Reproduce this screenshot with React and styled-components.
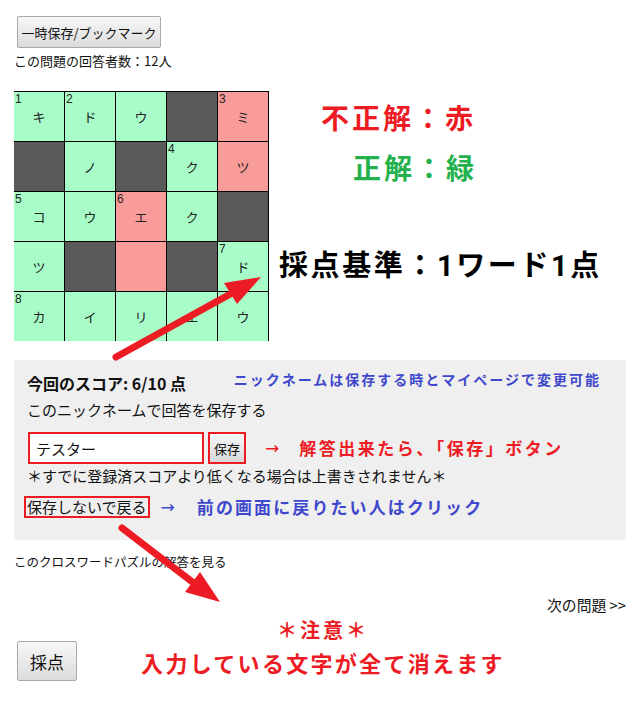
import React from "react";
import styled, { createGlobalStyle } from "styled-components";

const Global = createGlobalStyle`
  html, body { margin: 0; padding: 0; background: #fff; }
  body { font-family: "Noto Sans CJK JP", "Noto Sans", sans-serif; color: #111; }
  * { box-sizing: border-box; }
`;

const Page = styled.div`
  position: relative;
  width: 639px;
  height: 701px;
  padding: 16px 13px 0 14px;
  overflow: hidden;
`;

const GrayButton = styled.button`
  font-family: "Noto Sans CJK JP", sans-serif;
  font-size: ${(p) => p.$size || 14}px;
  color: #111;
  height: ${(p) => p.$h || 32}px;
  width: ${(p) => p.$w}px;
  margin-left: 3px;
  padding: 0;
  border: 1px solid #a9a9a9;
  border-radius: 2px;
  background: linear-gradient(#f7f7f7, #dcdcdc);
  display: flex;
  align-items: center;
  justify-content: center;
  line-height: 1;
  white-space: nowrap;
`;

const Count = styled.div`
  font-size: 13px;
  line-height: 18px;
  margin-top: 4px;
`;

const BoardRow = styled.div`
  display: flex;
  margin-top: 21px;
`;

const Board = styled.div`
  display: grid;
  grid-template-columns: repeat(5, 51px);
  grid-template-rows: repeat(5, 50px);
`;

const colors = { g: "#a7fcc7", r: "#f99c99", b: "#5a5a5a" };

const Cell = styled.div`
  position: relative;
  background: ${(p) => colors[p.$c]};
  border-top: 1px solid #000;
  border-right: 1px solid #000;
  display: flex;
  align-items: center;
  justify-content: center;
  font-size: 13px;
  color: #222;
`;

const Num = styled.span`
  position: absolute;
  left: 1px;
  top: 1px;
  font-family: "Liberation Sans", Arial, sans-serif;
  font-size: 12px;
  line-height: 12px;
  color: #222;
`;

const Legend = styled.div`
  display: flex;
  flex-direction: column;
  margin-left: 10px;
  padding-top: 11px;
`;

const LegendLine = styled.div`
  font-family: Roboto, "Noto Sans CJK JP", sans-serif;
  font-weight: 700;
  font-size: ${(p) => p.$size}px;
  line-height: ${(p) => p.$lh}px;
  letter-spacing: ${(p) => p.$ls}px;
  color: ${(p) => p.$color};
  padding-left: ${(p) => p.$pl}px;
  margin-top: ${(p) => p.$mt || 0}px;
  white-space: nowrap;
`;

const Panel = styled.div`
  margin-top: 19px;
  height: 180px;
  background: #efefef;
  border-radius: 3px;
  padding: 10px 25px 0 13px;
`;

const PanelHead = styled.div`
  display: flex;
  justify-content: space-between;
  align-items: flex-start;
`;

const Score = styled.div`
  font-size: 16px;
  font-weight: 700;
  line-height: 20px;
  padding-top: 3px;
`;

const Hint = styled.span`
  font-weight: 700;
  color: ${(p) => p.$color};
  font-size: ${(p) => p.$size}px;
  letter-spacing: ${(p) => p.$ls}px;
  line-height: ${(p) => p.$lh || 18}px;
  white-space: nowrap;
`;

const Arrow = styled.span`
  color: ${(p) => p.$color};
  font-size: 17px;
  line-height: 20px;
  margin-right: ${(p) => p.$gap}px;
  font-family: "DejaVu Sans", sans-serif;
`;

const PlainLine = styled.div`
  font-size: 15px;
  line-height: 20px;
  margin-top: ${(p) => p.$mt}px;
  white-space: nowrap;
`;

const InputRow = styled.div`
  display: flex;
  align-items: center;
  margin-top: 12px;
  height: 32px;
`;

const NameInput = styled.input`
  width: 176px;
  height: 32px;
  margin-left: 1px;
  border: 2px solid #ed1c24;
  background: #fff;
  padding: 0 6px;
  font-family: "Noto Sans CJK JP", sans-serif;
  font-size: 15px;
  color: #111;
  outline: none;
`;

const SaveButton = styled.button`
  width: 38px;
  height: 32px;
  margin-left: 4px;
  margin-right: 19px;
  padding: 0;
  border: 2px solid #ed1c24;
  background: linear-gradient(#f7f7f7, #d9d9d9);
  font-family: "Noto Sans CJK JP", sans-serif;
  font-size: 13px;
  color: #111;
`;

const BackRow = styled.div`
  display: flex;
  align-items: center;
  margin-top: 10px;
  margin-left: -3px;
`;

const BackBox = styled.span`
  border: 2px solid #ed1c24;
  height: 22px;
  padding: 0 1px;
  font-size: 15px;
  line-height: 18px;
  margin-right: 11px;
  white-space: nowrap;
`;

const SmallLink = styled.div`
  font-size: 12.5px;
  line-height: 16px;
  margin-top: 14px;
`;

const NextLink = styled.div`
  text-align: right;
  font-size: 14.8px;
  line-height: 18px;
  margin-top: 26px;
`;

const Bottom = styled.div`
  display: grid;
  margin-top: 3px;
  & > * { grid-area: 1 / 1; }
`;

const Notice = styled.div`
  justify-self: center;
  display: flex;
  flex-direction: column;
  align-items: center;
  gap: 5px;
  color: #ed1c24;
  font-weight: 700;
  margin-left: 6px;
`;

const NoticeLine = styled.div`
  font-size: ${(p) => p.$size}px;
  line-height: ${(p) => p.$lh}px;
  letter-spacing: ${(p) => p.$ls}px;
  white-space: nowrap;
`;

const ScoreButton = styled(GrayButton)`
  justify-self: start;
  align-self: start;
  margin-top: 24px;
`;

const Overlay = styled.svg`
  position: absolute;
  left: 0;
  top: 0;
  pointer-events: none;
`;

const grid = [
  [["g", "1", "キ"], ["g", "2", "ド"], ["g", "", "ウ"], ["b"], ["r", "3", "ミ"]],
  [["b"], ["g", "", "ノ"], ["b"], ["g", "4", "ク"], ["r", "", "ツ"]],
  [["g", "5", "コ"], ["g", "", "ウ"], ["r", "6", "エ"], ["g", "", "ク"], ["b"]],
  [["g", "", "ツ"], ["b"], ["r", "", ""], ["b"], ["g", "7", "ド"]],
  [["g", "8", "カ"], ["g", "", "イ"], ["g", "", "リ"], ["g", "", "エ"], ["g", "", "ウ"]],
];

const RED = "#ed1c24";
const BLUE = "#3f48cc";
const GREEN = "#22b14c";

export default function App() {
  return (
    <>
      <Global />
      <Page>
        <GrayButton $w={144} $size={13}>一時保存/ブックマーク</GrayButton>
        <Count>この問題の回答者数：12人</Count>
        <BoardRow>
          <Board>
            {grid.flat().map(([c, n, ch], i) => (
              <Cell key={i} $c={c}>
                {n && <Num>{n}</Num>}
                {ch}
              </Cell>
            ))}
          </Board>
          <Legend>
            <LegendLine $size={28} $lh={36} $ls={3} $color={RED} $pl={42}>
              不正解：赤
            </LegendLine>
            <LegendLine $size={28} $lh={36} $ls={3} $color={GREEN} $pl={74} $mt={14}>
              正解：緑
            </LegendLine>
            <LegendLine $size={29} $lh={39} $ls={2.6} $color="#000" $pl={0} $mt={59}>
              採点基準：1ワード1点
            </LegendLine>
          </Legend>
        </BoardRow>

        <Panel>
          <PanelHead>
            <Score>今回のスコア: 6/10 点</Score>
            <Hint $color={BLUE} $size={14} $ls={2.0}>
              ニックネームは保存する時とマイページで変更可能
            </Hint>
          </PanelHead>
          <PlainLine $mt={7}>このニックネームで回答を保存する</PlainLine>
          <InputRow>
            <NameInput defaultValue="テスター" />
            <SaveButton>保存</SaveButton>
            <Arrow $color={RED} $gap={20}>→</Arrow>
            <Hint $color={RED} $size={17} $ls={2.5} $lh={22}>
              解答出来たら、「保存」ボタン
            </Hint>
          </InputRow>
          <PlainLine $mt={2}>＊すでに登録済スコアより低くなる場合は上書きされません＊</PlainLine>
          <BackRow>
            <BackBox>保存しないで戻る</BackBox>
            <Arrow $color={BLUE} $gap={22}>→</Arrow>
            <Hint $color={BLUE} $size={17} $ls={2.1} $lh={22}>
              前の画面に戻りたい人はクリック
            </Hint>
          </BackRow>
        </Panel>

        <SmallLink>このクロスワードパズルの解答を見る</SmallLink>
        <NextLink>次の問題 &gt;&gt;</NextLink>
        <Bottom>
          <Notice>
            <NoticeLine $size={20} $lh={26} $ls={3}>＊注意＊</NoticeLine>
            <NoticeLine $size={22} $lh={28} $ls={2.3}>入力している文字が全て消えます</NoticeLine>
          </Notice>
          <ScoreButton $w={60} $h={40} $size={17}>採点</ScoreButton>
        </Bottom>

        <Overlay width="639" height="701" viewBox="0 0 639 701">
          <line x1="116" y1="357" x2="234" y2="292" stroke={RED} strokeWidth="7" strokeLinecap="round" />
          <polygon points="261,277 224,283 237,304" fill={RED} />
          <line x1="122" y1="528" x2="195" y2="584" stroke={RED} strokeWidth="7" strokeLinecap="round" />
          <polygon points="220,602 185,592 200,572" fill={RED} />
        </Overlay>
      </Page>
    </>
  );
}
